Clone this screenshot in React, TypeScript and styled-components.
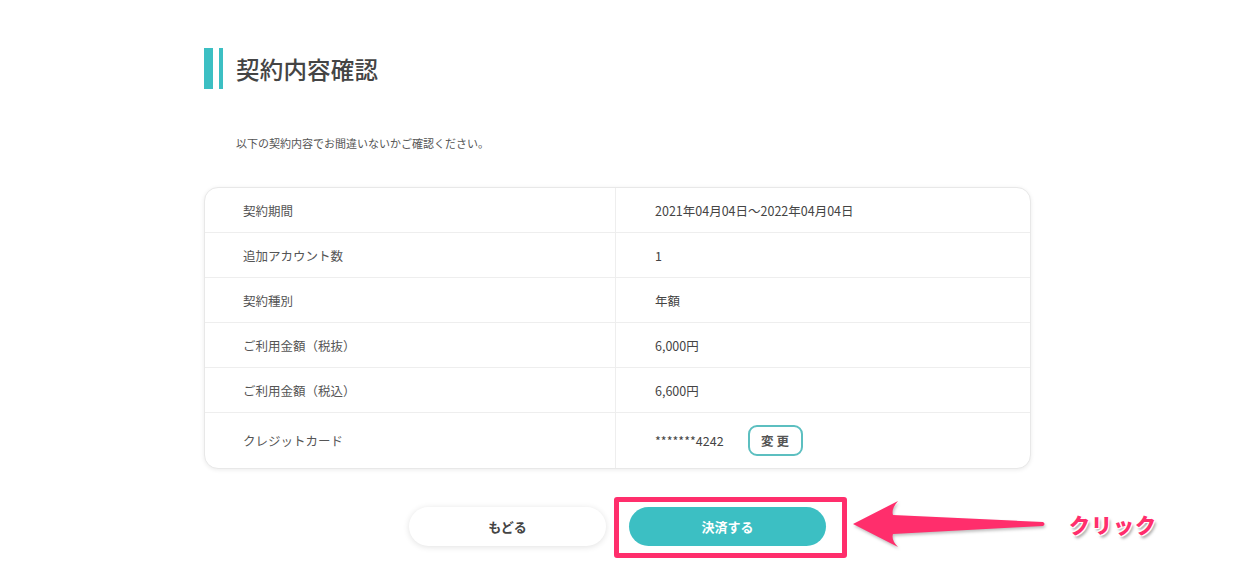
import styled, { createGlobalStyle } from "styled-components";

const GlobalStyle = createGlobalStyle`
  body {
    margin: 0;
    background: #fff;
    font-family: "Noto Sans CJK JP", "Noto Sans", sans-serif;
    color: #444;
  }
  * {
    box-sizing: border-box;
  }
`;

const TEAL = "#3cbfc3";
const PINK = "#ff2e6c";

const Page = styled.div`
  width: 827px;
  min-height: 573px;
  margin: 0 auto;
  padding-top: 48px;
`;

const Header = styled.div`
  display: flex;
  align-items: center;
  height: 41px;
`;

const Bars = styled.div`
  display: flex;
  gap: 6px;
  height: 100%;
  margin-right: 13px;
`;

interface BarProps {
  w: number;
}
const Bar = styled.span<BarProps>`
  display: block;
  width: ${(p) => p.w}px;
  height: 100%;
  background: ${TEAL};
`;

const Title = styled.h1`
  margin: 0;
  font-size: 23.5px;
  font-weight: 500;
  color: #444;
  letter-spacing: 0.2px;
`;

const Lead = styled.p`
  margin: 46px 0 0 32px;
  font-size: 11px;
  line-height: 16px;
  color: #555;
`;

const Card = styled.div`
  margin-top: 36px;
  border: 1px solid #e8e8e8;
  border-radius: 14px;
  box-shadow: 0 1px 4px rgba(0, 0, 0, 0.08);
  overflow: hidden;
  background: #fff;
`;

interface RowProps {
  tall?: boolean;
}
const Row = styled.div<RowProps>`
  display: grid;
  grid-template-columns: 411px 1fr;
  height: ${(p) => (p.tall ? 55 : 45)}px;
  border-bottom: 1px solid #eeeeee;
  &:last-child {
    border-bottom: none;
  }
`;

const Label = styled.div`
  display: flex;
  align-items: center;
  padding-left: 38px;
  border-right: 1px solid #eeeeee;
  font-size: 12.5px;
  color: #555;
`;

const Value = styled.div`
  display: flex;
  align-items: center;
  padding-left: 39px;
  gap: 24px;
  font-size: 12.5px;
  color: #444;
`;

const ChangeButton = styled.button`
  width: 55px;
  height: 31px;
  border: 2px solid #5cbfc0;
  border-radius: 9px;
  background: #fff;
  font-family: inherit;
  font-size: 12.5px;
  font-weight: 700;
  color: #555;
  letter-spacing: 3px;
  padding: 0 0 0 3px;
`;

const Actions = styled.div`
  display: flex;
  justify-content: center;
  align-items: flex-start;
  gap: 23px;
  margin-top: 38px;
`;

interface BtnProps {
  primary?: boolean;
}
const Button = styled.button<BtnProps>`
  display: block;
  width: 197px;
  height: 39px;
  border-radius: 20px;
  border: none;
  font-family: inherit;
  font-size: 13px;
  font-weight: 700;
  background: ${(p) => (p.primary ? TEAL : "#fff")};
  color: ${(p) => (p.primary ? "#fff" : "#444")};
  box-shadow: ${(p) =>
    p.primary ? "none" : "0 1px 6px rgba(0, 0, 0, 0.12)"};
`;

const Highlighted = styled.div`
  position: relative;
`;

// red annotation box drawn over the pay button
const Highlight = styled.div`
  position: absolute;
  left: -15px;
  right: -21px;
  top: -10px;
  bottom: -12px;
  border: 5px solid ${PINK};
  border-radius: 3px;
  pointer-events: none;
`;

const Annotation = styled.div`
  position: absolute;
  left: calc(100% + 25px);
  top: -9px;
  display: flex;
  align-items: center;
  gap: 22px;
  height: 52px;
`;

const ClickText = styled.span`
  font-size: 21px;
  font-weight: 900;
  color: ${PINK};
  letter-spacing: 1px;
  white-space: nowrap;
  text-shadow: -1px -1px 0 #fff, 1px -1px 0 #fff, -1px 1px 0 #fff,
    1px 1px 0 #fff, 2px 3px 3px rgba(0, 0, 0, 0.35);
`;

const rows: [string, string][] = [
  ["契約期間", "2021年04月04日〜2022年04月04日"],
  ["追加アカウント数", "1"],
  ["契約種別", "年額"],
  ["ご利用金額（税抜）", "6,000円"],
  ["ご利用金額（税込）", "6,600円"],
];

function Arrow() {
  return (
    <svg
      width="196"
      height="52"
      viewBox="0 0 196 52"
      style={{ filter: "drop-shadow(1px 2px 1.5px rgba(0,0,0,0.25))" }}
    >
      <path
        d="M2 26 L47 3 Q40 11 42 17 L192 24 Q195 26 192 28 L42 36 Q40 42 47 49 Z"
        fill={PINK}
      />
    </svg>
  );
}

export default function App() {
  return (
    <>
      <GlobalStyle />
      <Page>
        <Header>
          <Bars>
            <Bar w={9} />
            <Bar w={4} />
          </Bars>
          <Title>契約内容確認</Title>
        </Header>
        <Lead>以下の契約内容でお間違いないかご確認ください。</Lead>
        <Card>
          {rows.map(([label, value]) => (
            <Row key={label}>
              <Label>{label}</Label>
              <Value>{value}</Value>
            </Row>
          ))}
          <Row tall>
            <Label>クレジットカード</Label>
            <Value>
              *******4242
              <ChangeButton>変更</ChangeButton>
            </Value>
          </Row>
        </Card>
        <Actions>
          <Button>もどる</Button>
          <Highlighted>
            <Button primary>決済する</Button>
            <Highlight />
            <Annotation>
              <Arrow />
              <ClickText>クリック</ClickText>
            </Annotation>
          </Highlighted>
        </Actions>
      </Page>
    </>
  );
}
